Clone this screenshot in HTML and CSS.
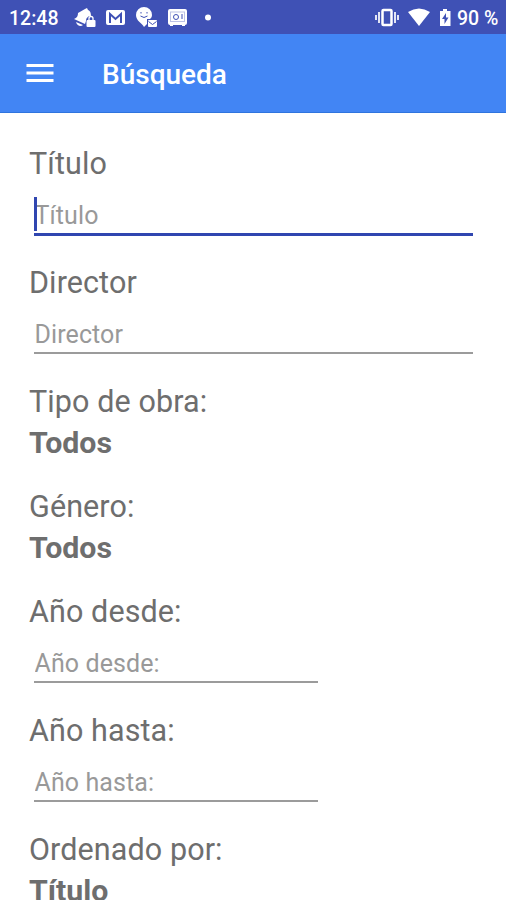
FILE: index.html
```html
<!DOCTYPE html>
<html lang="es"><head><meta charset="utf-8"><title>Búsqueda</title><link rel="stylesheet" href="styles.css"></head>
<body>
<header class="status">
<span class="clock">12:48</span>
<svg class="notices" width="145" height="34" viewBox="70 0 145 34">
<g fill="#fff">
<path d="M78 13l7-4 2-1 1 2c3 1 3 5 3 6-3 0-5 2-5 5l-1 3-11-5c3-1 4-3 4-6z"/>
<path d="M76 22l7 3c-2 2-6 1-7-3z"/>
<rect x="86.500" y="20" width="9" height="7" rx="1"/>
<path d="M108 10h15a2 2 0 0 1 2 2v11a2 2 0 0 1-2 2h-15a2 2 0 0 1-2-2V12a2 2 0 0 1 2-2z"/>
<path d="M144 7a8 8 0 0 1 8 8c0 2-1 3-2 4h-3v5l-3 3c-2-4-8-6-8-12a8 8 0 0 1 8-8z"/>
<rect x="148" y="20" width="9" height="7" rx="1"/>
<path d="M170 9h15a2 2 0 0 1 2 2v12a2 2 0 0 1-2 2v1h-3v-1h-9v1h-3v-1a2 2 0 0 1-2-2V11a2 2 0 0 1 2-2z"/>
<circle cx="208" cy="17.500" r="3"/>
</g>
<path d="M89 20v-1.500a2 2 0 0 1 4 0V20" fill="none" stroke="#fff" stroke-width="1.300"/>
<path d="M110 23V14l5.500 5 5.500-5v9" fill="none" stroke="#3f51b5" stroke-width="2"/>
<g fill="none" stroke="#3f51b5">
<path d="M140.500 16q3.500 3 7 0M148.500 21.500l4 3 4-3"/><path d="M141 12v1.500M147 12v1.500"/>
<rect x="170.500" y="12" width="14" height="9.500" opacity=".35"/><circle cx="176" cy="17" r="2.500"/><path d="M182 14v5"/>
</g>
</svg>
<svg class="system" width="80" height="34" viewBox="374 0 80 34">
<rect x="382.500" y="10" width="9" height="15" rx="1" fill="none" stroke="#fff" stroke-width="2.500"/>
<path d="M379 12v11m-3-8v5m19-8v11m3-8v5" stroke="#fff" stroke-width="2" opacity=".85"/>
<path fill="#fff" d="M408 12q11-7 22 0l-11 14z"/><path fill="#fff" d="M440 11h3V9h4v2h3.500v15H440z"/>
<path fill="#3f51b5" d="M446 13l-4 6h2.500v5l4-6.500H446z"/>
</svg>
<span class="battery">90 %</span>
</header>
<nav class="bar"><svg width="28" height="20" viewBox="0 0 28 20"><path d="M.5 2.500h27M.5 10h27M.5 17.500h27" stroke="#fff" stroke-width="2.800"/></svg><h1>Búsqueda</h1></nav>
<main>
<section class="field"><label for="t">Título</label><div class="input focus"><input id="t" placeholder="Título"></div></section>
<section class="field"><label for="d">Director</label><div class="input"><input id="d" placeholder="Director"></div></section>
<section class="choice"><span>Tipo de obra:</span><strong>Todos</strong></section>
<section class="choice"><span>Género:</span><strong>Todos</strong></section>
<section class="field"><label for="f">Año desde:</label><div class="input short"><input id="f" placeholder="Año desde:"></div></section>
<section class="field"><label for="h">Año hasta:</label><div class="input short"><input id="h" placeholder="Año hasta:"></div></section>
<section class="choice"><span>Ordenado por:</span><strong>Título</strong></section>
</main></body></html>
```
FILE: styles.css
```css
*{box-sizing:border-box}
body{margin:0;height:900px;overflow:hidden;background:#fff;font-family:Roboto,sans-serif;color:#6e6e6e}
.status{height:34px;background:#3f51b5;color:#fff;display:flex;align-items:center;font-size:19.5px;font-weight:500;padding-top:2px}
.status svg{flex:none;margin-top:-2px}
.clock{width:61px;margin-left:9px}
.status .system{margin-left:159px}
.battery{margin-left:3px;white-space:nowrap}
.bar{height:79px;background:#4285f4;border-bottom:1px solid #2f74de;color:#fff;display:flex;align-items:center;padding:2px 0 0 26px}
.bar svg{margin-top:-2px}
h1{font-size:28px;font-weight:500;margin:0 0 0 48px}
main{padding:30px 33px 0 29px}
.field{height:119px}
.field label,.choice span,.choice strong{display:block;font-size:30.5px;line-height:41px}
.field label,.choice span{letter-spacing:.1px}
.choice strong{font-size:30.3px}
.choice{height:105px}
.input{margin-left:5px;height:51px;border-bottom:2px solid #9b9b9b;padding-top:13px}
.short{width:284px}
.focus{position:relative;height:52px;border-bottom:3px solid #3046b0}
.focus::before{content:"";position:absolute;left:0;top:13px;width:3px;height:34px;background:#3046b0}
input{display:block;width:100%;height:37px;padding:0 0 0 .5px;border:0;outline:0;background:transparent;font:25px/37px Roboto,sans-serif;letter-spacing:.1px}
input::placeholder{color:#999;opacity:1}
```
